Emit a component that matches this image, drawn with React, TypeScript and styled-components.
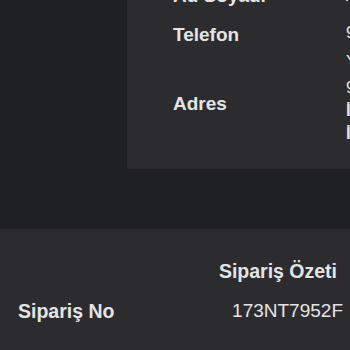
import React from "react";
import styled, { createGlobalStyle } from "styled-components";

const Global = createGlobalStyle`
  html, body { margin: 0; padding: 0; background: #1f2023; }
  body { font-family: "Liberation Sans", Arial, sans-serif; }
`;

const Page = styled.div`
  width: 350px;
  height: 350px;
  overflow: hidden;
  background: #1f2023;
  display: flex;
  flex-direction: column;
  color: #e4e4e6;
`;

const Card = styled.section`
  margin: -18px -200px 0 127px;
  padding: 0 0 24px 46px;
  background: #2c2c2e;
  display: flex;
  flex-direction: column;
`;

const Row = styled.div`
  display: grid;
  grid-template-columns: 173px 1fr;
  align-items: start;
`;

const Label = styled.div<{ $pad?: number }>`
  font-size: 19px;
  font-weight: 700;
  line-height: 28px;
  padding-top: ${(p) => p.$pad ?? 0}px;
  white-space: nowrap;
`;

const Values = styled.div<{ $lh: number; $pt?: number }>`
  display: flex;
  flex-direction: column;
  font-size: 17px;
  line-height: ${(p) => p.$lh}px;
  margin-top: ${(p) => p.$pt ?? 0}px;
  white-space: nowrap;
  font-weight: 400;
`;

const Strong = styled.span`
  font-weight: 700;
`;

const Spacer = styled.div<{ $h: number }>`
  height: ${(p) => p.$h}px;
  flex: none;
`;

const Summary = styled.section`
  flex: 1;
  background: #2c2c2e;
  padding: 28px 7px 0 18px;
  display: flex;
  flex-direction: column;
  gap: 12px;
`;

const SummaryTitle = styled.h2`
  margin: 0 6px 0 0;
  align-self: flex-end;
  font-size: 19.5px;
  font-weight: 700;
  line-height: 28px;
`;

const SummaryRow = styled.div`
  display: flex;
  justify-content: space-between;
  align-items: center;
  line-height: 28px;
`;

const SummaryLabel = styled.span`
  font-size: 19.5px;
  font-weight: 700;
`;

const SummaryValue = styled.span`
  font-size: 19px;
  font-weight: 400;
`;

export default function App() {
  return (
    <>
      <Global />
      <Page>
        <Card>
          <Row>
            <Label>Ad Soyadı</Label>
            <Values $lh={28}>
              <span>Ahmet Yılmaz</span>
            </Values>
          </Row>
          <Spacer $h={11} />
          <Row>
            <Label>Telefon</Label>
            <Values $lh={29} $pt={-3}>
              <span>905321234567</span>
              <span>Yedek</span>
            </Values>
          </Row>
          <Row>
            <Label $pad={14}>Adres</Label>
            <Values $lh={23}>
              <span>9 Eylül Mah.</span>
              <Strong>İzmir</Strong>
              <Strong>İstanbul</Strong>
            </Values>
          </Row>
        </Card>
        <Spacer $h={60} />
        <Summary>
          <SummaryTitle>Sipariş Özeti</SummaryTitle>
          <SummaryRow>
            <SummaryLabel>Sipariş No</SummaryLabel>
            <SummaryValue>173NT7952F</SummaryValue>
          </SummaryRow>
        </Summary>
      </Page>
    </>
  );
}
